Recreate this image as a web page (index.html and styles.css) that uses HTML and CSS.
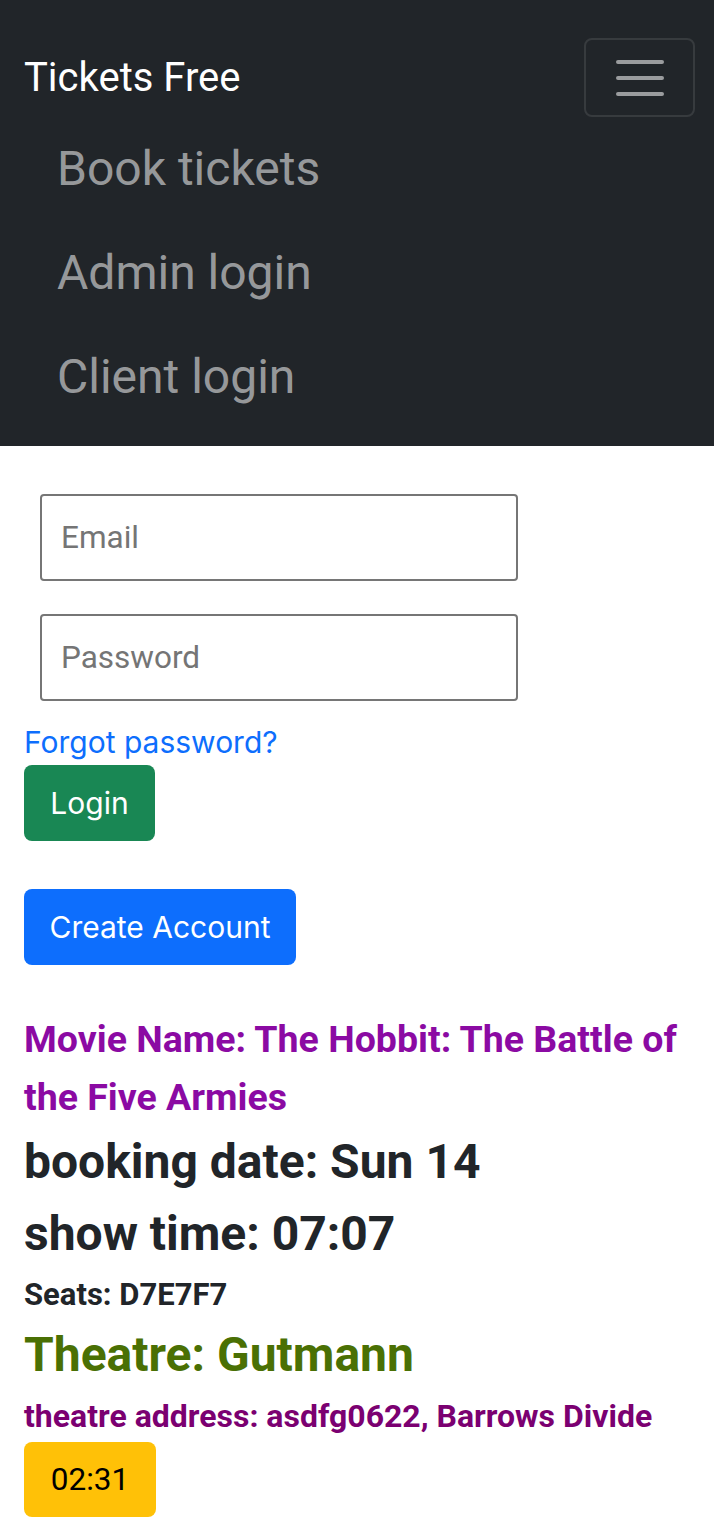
FILE: index.html
```html
<!DOCTYPE html>
<html lang="en">
<head>
<meta charset="utf-8">
<title>Tickets Free</title>
<link rel="stylesheet" href="styles.css">
</head>
<body>
<nav class="navbar">
  <div class="nav-top">
    <a class="brand" href="#">Tickets Free</a>
    <button class="toggler" type="button" aria-label="Toggle navigation">
      <svg width="60" height="60" viewBox="0 0 30 30"><path stroke="rgba(255,255,255,0.55)" stroke-linecap="round" stroke-width="2" d="M4 7h22M4 15h22M4 23h22"/></svg>
    </button>
  </div>
  <ul class="nav-links">
    <li><a href="#">Book tickets</a></li>
    <li><a href="#">Admin login</a></li>
    <li><a href="#">Client login</a></li>
  </ul>
</nav>
<main class="content">
  <form class="login-form">
    <input class="field" type="email" placeholder="Email">
    <input class="field" type="password" placeholder="Password">
  </form>
  <a class="forgot" href="#">Forgot password?</a>
  <div class="actions">
    <button class="btn btn-green" type="button">Login</button>
    <button class="btn btn-blue" type="button">Create Account</button>
  </div>
  <section class="ticket">
    <h3 class="movie">Movie Name: The Hobbit: The Battle of the Five Armies</h3>
    <h2 class="big">booking date: Sun 14</h2>
    <h2 class="big">show time: 07:07</h2>
    <h5 class="seats">Seats: D7E7F7</h5>
    <h2 class="theatre">Theatre: Gutmann</h2>
    <h4 class="address">theatre address: asdfg0622, Barrows Divide</h4>
    <span class="timer">02:31</span>
  </section>
</main>
</body>
</html>
```
FILE: styles.css
```css
* { box-sizing: border-box; }
html, body { margin: 0; padding: 0; }
body {
  font-family: Roboto, "Noto Sans", sans-serif;
  color: #212529;
  background: #fff;
}
.navbar {
  background: #212529;
  padding: 16px 19px 17px 24px;
}
.nav-top {
  display: flex;
  justify-content: space-between;
  align-items: center;
  padding-top: 22px;
}
.brand {
  color: #fff;
  text-decoration: none;
  font-size: 40px;
  line-height: 76px;
}
.toggler {
  width: 111px;
  height: 79px;
  background: transparent;
  border: 2px solid rgba(255,255,255,0.1);
  border-radius: 8px;
  display: flex;
  align-items: center;
  justify-content: center;
  padding: 0;
}
.nav-links {
  list-style: none;
  margin: 0;
  padding: 0 0 0 33px;
}
.nav-links a {
  display: block;
  color: rgba(255,255,255,0.55);
  text-decoration: none;
  font-size: 48px;
  line-height: 72px;
  padding: 16px 0;
}
.content {
  padding: 48px 24px 40px 24px;
}
.login-form {
  display: flex;
  flex-direction: column;
  gap: 33px;
  padding-left: 16px;
}
.field {
  width: 478px;
  height: 87px;
  border: 2px solid #767676;
  border-radius: 4px;
  padding: 0 19px;
  font-family: Roboto, sans-serif;
  font-size: 31.5px;
  color: #212529;
}
.field::placeholder { color: #757575; }
.forgot {
  display: block;
  margin-top: 21px;
  font-family: Inter, "Liberation Sans", sans-serif;
  font-size: 30px;
  line-height: 40px;
  color: #0d6efd;
  text-decoration: none;
}
.actions {
  display: flex;
  flex-direction: column;
  align-items: flex-start;
  gap: 48px;
  margin-top: 3px;
}
.btn {
  height: 76px;
  border: none;
  border-radius: 8px;
  color: #fff;
  font-family: Inter, "Liberation Sans", sans-serif;
  font-size: 30px;
  padding: 0;
}
.btn-green { background: #198754; width: 131px; }
.btn-blue { background: #0d6efd; width: 272px; }
.ticket { margin-top: 45px; }
.ticket h2, .ticket h3, .ticket h4, .ticket h5 { margin: 0; font-weight: 700; }
.movie {
  color: #8b0aa3;
  font-size: 37.5px;
  line-height: 58px;
}
.big {
  font-size: 48px;
  line-height: 72px;
  color: #212529;
}
.seats {
  font-size: 31px;
  line-height: 50px;
}
.theatre {
  color: #4a7004;
  font-size: 48px;
  line-height: 70px;
}
.address {
  color: #7b0071;
  font-size: 32px;
  line-height: 52px;
}
.timer {
  display: inline-flex;
  align-items: center;
  justify-content: center;
  width: 132px;
  height: 75px;
  background: #ffc107;
  border-radius: 8px;
  font-size: 31.5px;
  color: #000;
}
```
